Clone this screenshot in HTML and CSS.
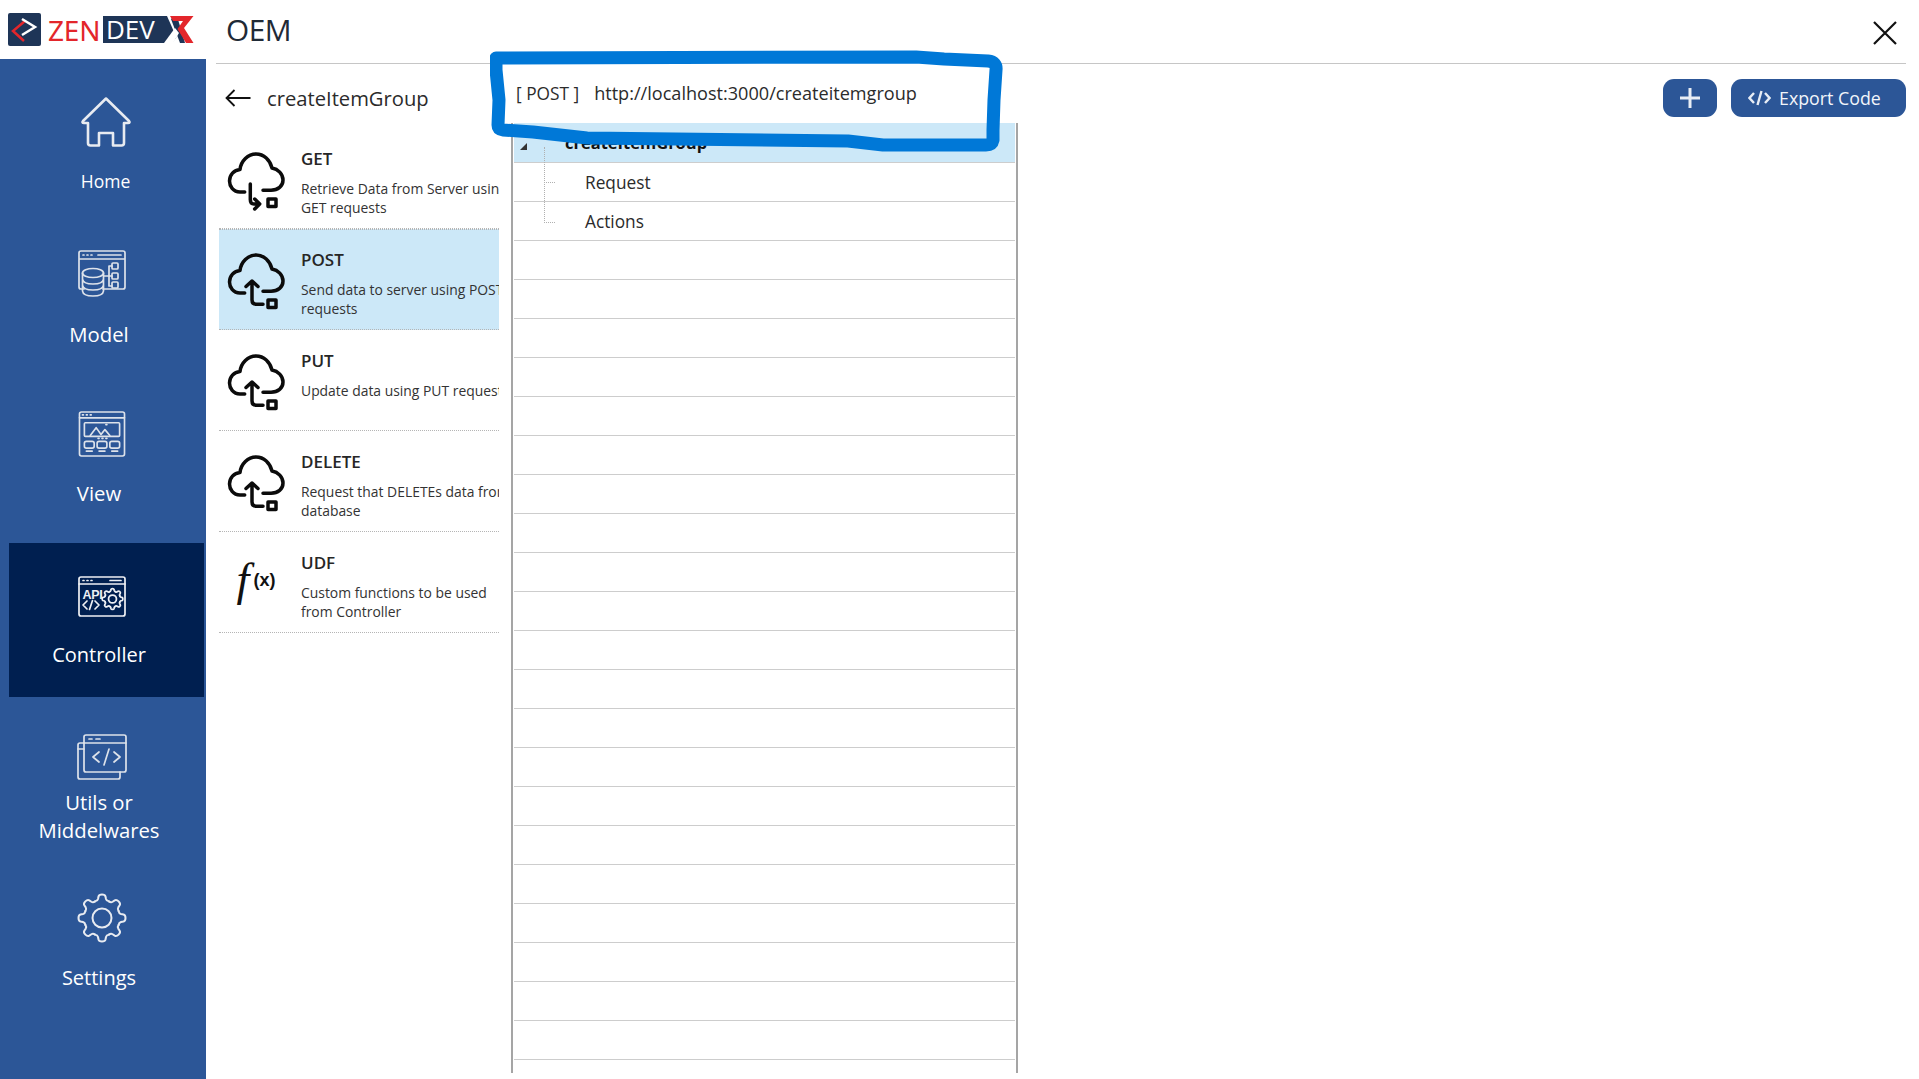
FILE: index.html
```html
<!DOCTYPE html>
<html lang="en">
<head>
<meta charset="utf-8">
<title>OEM</title>
<link rel="stylesheet" href="styles.css">
</head>
<body>
<div class="app">
  <header class="topbar">
    <div class="logo">
      <svg class="logo-mark" viewBox="0 0 33 33"><rect width="33" height="33" rx="2" fill="#1e3557"/><path d="M17 8 L5 18 L16 28" fill="none" stroke="#e3262b" stroke-width="2.5"/><path d="M14 6 L27 14 L14 22" fill="none" stroke="#fff" stroke-width="2.5"/></svg>
      <span class="logo-zen">ZEN</span>
      <span class="logo-dev">DEV</span>
      <svg class="logo-x" viewBox="0 0 30 28"><path d="M-3 0H6L17 14L7 27H-3Z" fill="#1e3557"/><path d="M2 0H9L25 27H14Z" fill="#fff"/><path d="M6 3L9 0H12L20 27H15Z" fill="#1e3557"/><path d="M5 0H28.500L19 12L28.500 27H21L12.500 13L18 5H8Z" fill="#e3262b"/><path d="M-1 27L10 12L14 17L8 27Z" fill="#fff"/></svg>
    </div>
    <h1 class="app-title">OEM</h1>
    <svg class="close" viewBox="0 0 24 24"><path d="M1 1L23 23M23 1L1 23" stroke="#111" stroke-width="2.2" fill="none"/></svg>
  </header>
  <div class="body">
    <nav class="sidebar">
      <a class="nav-item nav-home">
        <svg class="nav-icon icon-home" viewBox="0 0 50 50"><path d="M25 1.500L2 24Q0.500 26 3 26H7V46Q7 48.500 9.500 48.500H18V36H32V48.500H40.500Q43 48.500 43 46V26H47Q49.500 26 48 24Z"/></svg>
        <span class="nav-label label-home">Home</span>
      </a>
      <a class="nav-item nav-model">
        <svg class="nav-icon icon-model" viewBox="0 0 48 47"><path d="M6 39H3Q1 39 1 37V3Q1 1 3 1H45Q47 1 47 3V37Q47 39 45 39H25M1 9H47"/><path d="M5 5H6M9 5H10M13 5H14M20 5H43"/><ellipse cx="15" cy="23" rx="10.500" ry="4.500"/><path d="M4.500 23V41Q5 46 15 46T25.500 41V23M4.500 29Q5 34 15 34T25.500 29M4.500 35Q5 40 15 40T25.500 35"/><path d="M26 26H31M31 16V36M31 16H34M31 26H34M31 36H34"/><rect x="34" y="13" width="6" height="6" rx="1"/><rect x="34" y="23" width="6" height="6" rx="1"/><rect x="34" y="32" width="6" height="6" rx="1"/></svg>
        <span class="nav-label label-model">Model</span>
      </a>
      <a class="nav-item nav-view">
        <svg class="nav-icon icon-view" viewBox="0 0 48 47"><rect x="1" y="1" width="46" height="45" rx="2"/><path d="M1 7H47M4 4H5M8 4H9M12 4H13"/><rect x="6" y="12" width="36" height="14" rx="1"/><path d="M12 25L18 17L23 24L27 19L32 25M28 14H29M20 28H21M24 28H25M28 28H29"/><rect x="6" y="31" width="10" height="7" rx="2"/><rect x="19" y="31" width="10" height="7" rx="2"/><rect x="32" y="31" width="10" height="7" rx="2"/><path d="M8 41H14M21 41H27M34 41H40"/></svg>
        <span class="nav-label label-view">View</span>
      </a>
      <a class="nav-item nav-controller is-active">
        <svg class="nav-icon icon-controller" viewBox="0 0 48 41"><rect x="1" y="1" width="46" height="39" rx="2"/><path d="M1 8H47M5 4.500H6M9 4.500H10M13 4.500H14M32 4.500H43"/><text class="api-text" x="4.500" y="22.500">API</text><path d="M9 25L5 29L9 33M17 25L21 29L17 33M14.500 24.500L11.500 33.500"/><g transform="translate(23.500 12) scale(.44)"><circle cx="25" cy="25" r="9" stroke-width="4"/><g stroke-width="4"><path id="t1" d="M18.110 8.370Q20.500 8 21 6L21.500 3.500Q22 1.500 25 1.500Q28 1.500 28.500 3.500L29 6Q29.500 8 31.890 8.370"/><use href="#t1" transform="rotate(45 25 25)"/><use href="#t1" transform="rotate(90 25 25)"/><use href="#t1" transform="rotate(135 25 25)"/><use href="#t1" transform="rotate(180 25 25)"/><use href="#t1" transform="rotate(225 25 25)"/><use href="#t1" transform="rotate(270 25 25)"/><use href="#t1" transform="rotate(315 25 25)"/></g></g></svg>
        <span class="nav-label label-controller">Controller</span>
      </a>
      <a class="nav-item nav-utils">
        <svg class="nav-icon icon-utils" viewBox="0 0 50 45"><path d="M7 9H3Q1 9 1 11V43Q1 45 3 45H41Q43 45 43 43V38"/><path d="M1 15H7"/><rect x="7" y="1" width="42" height="37" rx="2"/><path d="M7 9H49M12 5H15M19 5H23"/><path d="M22 18L16 23L22 28M37 18L43 23L37 28M32 15L27 31"/></svg>
        <span class="nav-label label-utils">Utils or<br>Middelwares</span>
      </a>
      <a class="nav-item nav-settings">
        <svg class="nav-icon icon-settings" viewBox="0 0 50 50"><circle cx="25" cy="25" r="9.500"/><g><use href="#t1"/><use href="#t1" transform="rotate(45 25 25)"/><use href="#t1" transform="rotate(90 25 25)"/><use href="#t1" transform="rotate(135 25 25)"/><use href="#t1" transform="rotate(180 25 25)"/><use href="#t1" transform="rotate(225 25 25)"/><use href="#t1" transform="rotate(270 25 25)"/><use href="#t1" transform="rotate(315 25 25)"/></g></svg>
        <span class="nav-label label-settings">Settings</span>
      </a>
    </nav>
    <main class="content">
      <div class="toolbar">
        <svg class="back" viewBox="0 0 27 20"><path d="M26 10H2M10 2L2 10L10 18" fill="none" stroke="#111" stroke-width="1.800"/></svg>
        <h2 class="page-title">createItemGroup</h2>
        <div class="actions">
          <button class="btn btn-add"><svg viewBox="0 0 22 22"><path d="M11 1V21M1 11H21" stroke="#e8edf5" stroke-width="3" fill="none"/></svg></button>
          <button class="btn btn-export"><svg viewBox="0 0 23 16"><path d="M6 3L1.500 8L6 13M17 3L21.500 8L17 13M13.500 1L9.500 15" stroke="#e8edf5" stroke-width="2.400" fill="none"/></svg><span>Export Code</span></button>
        </div>
      </div>
      <div class="columns">
        <ul class="methods">
          <li class="method">
            <svg class="method-icon" viewBox="0 0 56 56"><path class="cloud" d="M16.700 40H12C5 40 1.500 34 1.500 29C1.500 23 6 18 12 17.500C13 9 20 2 28 2C36 2 42 8 44 16C50 17 55 22 55 28C55 34 50 38.300 43 38.300H35"/><path class="cloud" d="M22.300 32V47.500Q22.300 52 26 52H31.700M26.700 47L31.700 52L26.700 57"/><rect class="cloud" x="40" y="47" width="8" height="7.500"/></svg>
            <div class="method-text"><div class="method-name">GET</div><p class="method-desc">Retrieve Data from Server using<br>GET requests</p></div>
          </li>
          <li class="method is-selected">
            <svg class="method-icon" viewBox="0 0 56 56"><path class="cloud" d="M16.700 40H12C5 40 1.500 34 1.500 29C1.500 23 6 18 12 17.500C13 9 20 2 28 2C36 2 42 8 44 16C50 17 55 22 55 28C55 34 50 38.300 43 38.300H35"/><path class="cloud" d="M35 51.300H28.500Q24 51.300 24 47V28M18 33.500L24 28L30 33.500"/><rect class="cloud" x="40" y="47" width="8" height="7.500"/></svg>
            <div class="method-text"><div class="method-name">POST</div><p class="method-desc">Send data to server using POST<br>requests</p></div>
          </li>
          <li class="method">
            <svg class="method-icon" viewBox="0 0 56 56"><path class="cloud" d="M16.700 40H12C5 40 1.500 34 1.500 29C1.500 23 6 18 12 17.500C13 9 20 2 28 2C36 2 42 8 44 16C50 17 55 22 55 28C55 34 50 38.300 43 38.300H35"/><path class="cloud" d="M35 51.300H28.500Q24 51.300 24 47V28M18 33.500L24 28L30 33.500"/><rect class="cloud" x="40" y="47" width="8" height="7.500"/></svg>
            <div class="method-text"><div class="method-name">PUT</div><p class="method-desc">Update data using PUT requests</p></div>
          </li>
          <li class="method">
            <svg class="method-icon" viewBox="0 0 56 56"><path class="cloud" d="M16.700 40H12C5 40 1.500 34 1.500 29C1.500 23 6 18 12 17.500C13 9 20 2 28 2C36 2 42 8 44 16C50 17 55 22 55 28C55 34 50 38.300 43 38.300H35"/><path class="cloud" d="M35 51.300H28.500Q24 51.300 24 47V28M18 33.500L24 28L30 33.500"/><rect class="cloud" x="40" y="47" width="8" height="7.500"/></svg>
            <div class="method-text"><div class="method-name">DELETE</div><p class="method-desc">Request that DELETEs data from<br>database</p></div>
          </li>
          <li class="method">
            <div class="method-icon fx"><span class="fx-f">f</span><span class="fx-x">(x)</span></div>
            <div class="method-text"><div class="method-name">UDF</div><p class="method-desc">Custom functions to be used<br>from Controller</p></div>
          </li>
        </ul>
        <div class="tree">
          <div class="tree-row is-root"><span class="expander"></span><span class="root-label">createItemGroup</span></div>
          <div class="tree-row"><span class="leaf-label">Request</span></div>
          <div class="tree-row"><span class="leaf-label">Actions</span></div>
          <div class="tree-row"></div><div class="tree-row"></div><div class="tree-row"></div><div class="tree-row"></div><div class="tree-row"></div>
          <div class="tree-row"></div><div class="tree-row"></div><div class="tree-row"></div><div class="tree-row"></div><div class="tree-row"></div>
          <div class="tree-row"></div><div class="tree-row"></div><div class="tree-row"></div><div class="tree-row"></div><div class="tree-row"></div>
          <div class="tree-row"></div><div class="tree-row"></div><div class="tree-row"></div><div class="tree-row"></div><div class="tree-row"></div>
          <div class="tree-row"></div>
          <span class="guide-v"></span><span class="guide-h guide-1"></span><span class="guide-h guide-2"></span>
        </div>
      </div>
    </main>
  </div>
  <div class="callout">
    <div class="callout-text"><span class="verb">[ POST ]</span><span class="url">http://localhost:3000/createitemgroup</span></div>
    <svg class="scribble" viewBox="0 0 520 110"><path d="M6 8L426 7L454 9L498 11Q507 12 506 20L504 50L503 80L503 90Q502 95 496 95L393 95L358 91L97 88L43 82L13 80Q8 79 8 75L9 50L6 20Z"/></svg>
  </div>
</div>
</body>
</html>
```
FILE: styles.css
```css
* { box-sizing: border-box; }
html, body { margin: 0; height: 100%; background: #fff; }
body { font-family: "Open Sans", "Noto Sans", sans-serif; color: #2b2b2b; overflow: hidden; }
.app { position: relative; width: 1919px; height: 1079px; display: flex; flex-direction: column; }

.topbar { height: 59px; flex: none; display: flex; align-items: center; padding-left: 8px; }
.logo { display: flex; align-items: center; width: 218px; flex: none; height: 59px; }
.logo-mark { width: 33px; height: 33px; flex: none; }
.logo-zen { margin-left: 7px; width: 55px; color: #e3262b; font-family: "Noto Sans", sans-serif; font-size: 28px; line-height: 30px; letter-spacing: -.2px; }
.logo-dev { background: #1e3557; color: #fff; height: 27px; width: 60px; font-size: 26px; line-height: 27px; padding-left: 3px; }
.logo-x { width: 30px; height: 28px; flex: none; overflow: visible; margin-left: 2px; }
.app-title { margin: 0; font-size: 29.800px; font-weight: 400; line-height: 36px; color: #1f2a36; letter-spacing: -.5px; }
.close { width: 24px; height: 24px; margin-left: auto; margin-right: 22px; margin-top: 6px; }

.body { flex: 1; display: flex; min-height: 0; }
.sidebar { width: 206px; flex: none; background: #2c5697; display: flex; flex-direction: column; }
.nav-item { display: flex; flex-direction: column; align-items: center; margin-left: 9px; margin-right: 2px; padding-right: 15px; color: #fff; }
.nav-item.is-active { background: #001f50; }
.nav-home { height: 157px; padding-top: 38px; padding-right: 2px; }
.nav-model { height: 170px; padding-top: 34px; }
.nav-view { height: 157px; padding-top: 25px; }
.nav-controller { height: 154px; padding-top: 33px; }
.nav-utils { height: 163px; padding-top: 37px; }
.nav-settings { padding-top: 33px; }
.nav-icon { display: block; flex: none; fill: none; stroke: #dde2ea; stroke-width: 1.700; stroke-linejoin: round; stroke-linecap: round; overflow: visible; }
.icon-home { width: 50px; height: 50px; stroke-width: 2.600; stroke: #e8ebf1; }
.icon-model, .icon-view { width: 48px; height: 47px; margin-left: 6px; }
.icon-view { height: 46px; }
.icon-controller { width: 48px; height: 41px; margin-left: 6px; stroke: #eef0f4; }
.icon-utils { width: 50px; height: 45px; margin-left: 6px; }
.icon-settings { width: 50px; height: 50px; margin-left: 6px; stroke-width: 2; stroke: #e8ebf1; }
.api-text { font-family: "Liberation Sans", sans-serif; font-weight: 700; font-size: 12.500px; fill: #eef0f4; stroke: none; letter-spacing: -.3px; }
.nav-label { display: block; text-align: center; white-space: nowrap; font-size: 20.300px; line-height: 28px; }
.label-home { font-size: 17.500px; line-height: 24px; margin-top: 22px; }
.label-model { margin-top: 23px; }
.label-view { margin-top: 22px; }
.label-controller { margin-top: 24px; font-size: 20px; }
.label-utils { margin-top: 9px; }
.label-settings { margin-top: 21px; font-size: 20px; }

.content { flex: 1; min-width: 0; margin: 4px 13px 0 10px; border-top: 1px solid #c6c6c6; display: flex; flex-direction: column; }
.toolbar { height: 59px; flex: none; display: flex; align-items: center; padding: 9px 0 0 8px; }
.back { width: 28px; height: 20px; flex: none; }
.page-title { margin: 0 0 0 15px; font-size: 20.200px; font-weight: 400; line-height: 28px; color: #2b2b2b; }
.actions { margin-left: auto; display: flex; gap: 14px; }
.btn { height: 38px; border: 0; border-radius: 11px; background: #2c5697; color: #f2f5fa; font: inherit; display: flex; align-items: center; justify-content: center; padding: 0; }
.btn-add { width: 54px; }
.btn-add svg { width: 22px; height: 22px; }
.btn-export { width: 175px; justify-content: flex-start; padding-left: 17px; gap: 8px; font-size: 17.800px; }
.btn-export svg { width: 23px; height: 16px; }

.columns { flex: 1; min-height: 0; display: flex; align-items: flex-start; padding-left: 3px; }
.methods { list-style: none; margin: 5px 0 0; padding: 0; width: 280px; flex: none; }
.method { height: 101px; display: flex; align-items: flex-start; gap: 17px; padding-left: 9px; overflow: hidden; border-bottom: 1px dotted #b5b5b5; }
.method.is-selected { background: #cce8f8; border-top: 1px dotted #b5b5b5; }
.method-icon { width: 56px; height: 56px; flex: none; margin-top: 24px; overflow: visible; }
.is-selected .method-icon { margin-top: 23px; }
.cloud { fill: none; stroke: #0b0b0b; stroke-width: 3.500; stroke-linecap: round; stroke-linejoin: round; }
.fx { display: flex; align-items: center; justify-content: center; margin-top: 26px; height: 44px; color: #111; }
.fx-f { font-family: "Liberation Serif", serif; font-style: italic; font-size: 46px; line-height: 44px; }
.fx-x { font-family: "Liberation Sans", sans-serif; font-weight: 700; font-size: 18px; margin-left: 4px; margin-top: 0; }
.method-text { flex: none; padding-top: 18px; white-space: nowrap; }
.is-selected .method-text { padding-top: 17px; }
.method-name { font-size: 17px; font-weight: 600; line-height: 25px; color: #262626; }
.method-desc { margin: 8px 0 0; font-size: 13.900px; line-height: 19px; color: #333; }

.tree { position: relative; margin-left: 12px; width: 507px; height: 950px; flex: none; border-left: 2px solid #a5a5a5; border-right: 2px solid #a5a5a5; padding: 0 1px; }
.tree-row { height: 39px; border-bottom: 1.500px solid #cdcdcd; display: flex; align-items: center; }
.tree-row.is-root { background: #cce8f8; height: 40px; }
.expander { position: absolute; left: 7px; top: 20px; width: 0; height: 0; border-style: solid; border-width: 0 0 7px 7px; border-color: transparent transparent #333 transparent; }
.root-label { margin-left: 51px; font-size: 16.500px; font-weight: 700; color: #111; }
.leaf-label { margin-left: 71px; font-size: 17.300px; color: #2b2b2b; }
.guide-v { position: absolute; left: 31px; top: 24px; height: 76px; border-left: 1px dotted #b0b0b0; }
.guide-h { position: absolute; left: 31px; width: 11px; border-top: 1px dotted #b0b0b0; }
.guide-1 { top: 59px; }
.guide-2 { top: 99px; }

.callout { position: absolute; left: 490px; top: 50px; width: 520px; height: 110px; }
.callout-text { position: absolute; left: 6px; top: 8px; width: 499px; height: 65px; background: #fff; display: flex; align-items: center; gap: 15px; padding: 5px 0 0 20px; color: #2b2b2b; white-space: nowrap; }
.verb { font-size: 17.300px; }
.url { font-size: 18.100px; }
.scribble { position: absolute; inset: 0; width: 520px; height: 110px; fill: none; stroke: #0078d7; stroke-width: 13; stroke-linejoin: round; stroke-linecap: round; }
```
